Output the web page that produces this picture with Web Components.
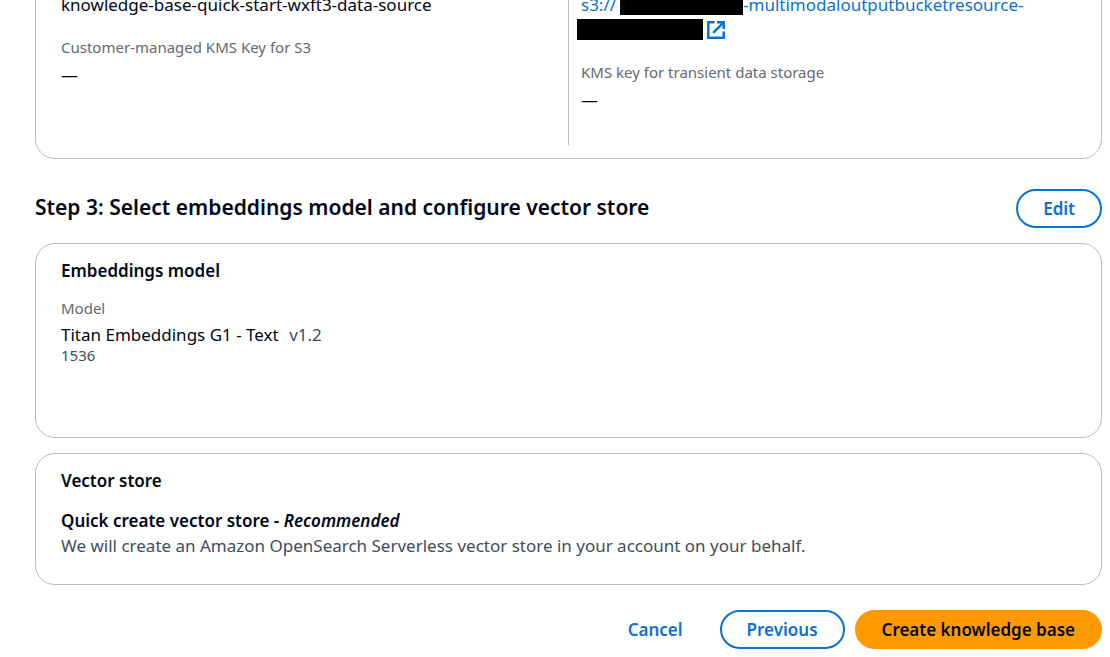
<!DOCTYPE html>
<html lang="en">
<head>
<meta charset="utf-8">
<meta name="viewport" content="width=device-width, initial-scale=1">
<title>Create knowledge base</title>
<style>
  body {
    margin: 0;
    background: #fff;
    color: #000716;
    font: 17px/25px "Noto Sans", "Open Sans", sans-serif;
  }
</style>
</head>
<body>
<kb-review></kb-review>

<script>
const define = (name, html) => {
  const template = document.createElement('template');
  template.innerHTML = html;
  customElements.define(name, class extends HTMLElement {
    constructor() {
      super();
      this.attachShadow({ mode: 'open' }).append(template.content.cloneNode(true));
    }
  });
};

define('kb-card', `
  <style>
    :host {
      display: block;
      box-sizing: border-box;
      padding: 14px 26px 26px 25px;
      border: 1px solid #b6bec9;
      border-radius: 20px;
      background: #fff;
    }
    ::slotted(h3) { margin: 0 0 15px; font-size: 17px; font-weight: 600; line-height: 25px; }
  </style>
  <slot></slot>`);

define('kb-field', `
  <style>
    :host { display: block; }
    .label { font-size: 15px; line-height: 20px; color: #656871; margin-bottom: 5px; }
  </style>
  <div class="label"><slot name="label"></slot></div>
  <div><slot></slot></div>`);

define('kb-columns', `
  <style>
    :host { display: grid; grid-template-columns: 1fr 1fr; }
    .column { display: flex; flex-direction: column; gap: 20px; min-width: 0; }
    .second { padding-left: 12px; border-left: 1px solid #b6bec9; }
  </style>
  <div class="column"><slot name="first"></slot></div>
  <div class="column second"><slot name="second"></slot></div>`);

define('kb-redacted', `
  <style>
    :host { display: inline-block; width: 123px; height: 21px; margin-left: 4px; background: #000; vertical-align: -4px; }
    :host([wide]) { width: 126px; margin-left: -4px; }
  </style>`);

define('kb-external-icon', `
  <style>
    :host { display: inline-block; width: 20px; height: 20px; margin-left: 3px; vertical-align: -4px; }
    svg { display: block; width: 100%; height: 100%; }
  </style>
  <svg viewBox="0 0 20 20" fill="none" stroke="currentColor" stroke-width="2.5" aria-hidden="true">
    <path d="M8.5 2.3H2.3v15.4h15.4V11.5M11 2.3h6.7V9M17.4 2.6 7.2 12.8"/>
  </svg>`);

define('kb-button', `
  <style>
    :host { display: block; }
    button {
      display: block;
      box-sizing: border-box;
      height: 39px;
      padding: 0 25px;
      border: 2px solid #0972d3;
      border-radius: 20px;
      background: #fff;
      color: #0972d3;
      font: inherit;
      font-weight: 600;
      line-height: 25px;
      white-space: nowrap;
      cursor: pointer;
    }
    :host([variant="link"]) button { border-color: transparent; background: transparent; }
    :host([variant="primary"]) button { border-color: #ff9900; background: #ff9900; color: #000716; }
  </style>
  <button type="button"><slot></slot></button>`);

define('kb-review', `
  <style>
    :host { display: block; overflow: hidden; }
    main { padding: 0 8px 8px 35px; }
    .storage { margin-top: -60px; padding-top: 51px; padding-bottom: 13px; }
    .value { line-height: 25px; }
    .link a { color: #0972d3; text-decoration: none; }
    .storage kb-columns { min-height: 153px; }
    .title { display: flex; align-items: flex-start; justify-content: space-between; margin: 30px 0 15px; }
    h2 { margin: 0; font-size: 21px; line-height: 37px; font-weight: 600; }
    .cards { display: grid; gap: 15px; }
    .model { padding-bottom: 74px; }
    .name { line-height: 24px; }
    .version { margin-left: 6px; color: #414d5c; }
    .size { font-size: 15px; line-height: 16px; color: #414d5c; }
    .choice { font-weight: 600; }
    .note { color: #414d5c; }
    footer { display: flex; justify-content: flex-end; gap: 10px; margin-top: 25px; }
  </style>
  <main>
    <kb-card class="storage">
      <kb-columns>
        <div slot="first" class="value">knowledge-base-quick-start-wxft3-data-source</div>
        <kb-field slot="first"><span slot="label">Customer-managed KMS Key for S3</span>—</kb-field>
        <div slot="second" class="value link"><a href="#">s3://<kb-redacted></kb-redacted>-multimodaloutputbucketresource-<br><kb-redacted wide></kb-redacted><kb-external-icon></kb-external-icon></a></div>
        <kb-field slot="second"><span slot="label">KMS key for transient data storage</span>—</kb-field>
      </kb-columns>
    </kb-card>
    <div class="title">
      <h2>Step 3: Select embeddings model and configure vector store</h2>
      <kb-button>Edit</kb-button>
    </div>
    <div class="cards">
      <kb-card class="model">
        <h3>Embeddings model</h3>
        <kb-field>
          <span slot="label">Model</span>
          <div class="name">Titan Embeddings G1 - Text <span class="version">v1.2</span></div>
          <div class="size">1536</div>
        </kb-field>
      </kb-card>
      <kb-card>
        <h3>Vector store</h3>
        <div class="choice">Quick create vector store - <em>Recommended</em></div>
        <div class="note">We will create an Amazon OpenSearch Serverless vector store in your account on your behalf.</div>
      </kb-card>
    </div>
    <footer>
      <kb-button variant="link">Cancel</kb-button>
      <kb-button>Previous</kb-button>
      <kb-button variant="primary">Create knowledge base</kb-button>
    </footer>
  </main>`);
</script>
</body>
</html>
